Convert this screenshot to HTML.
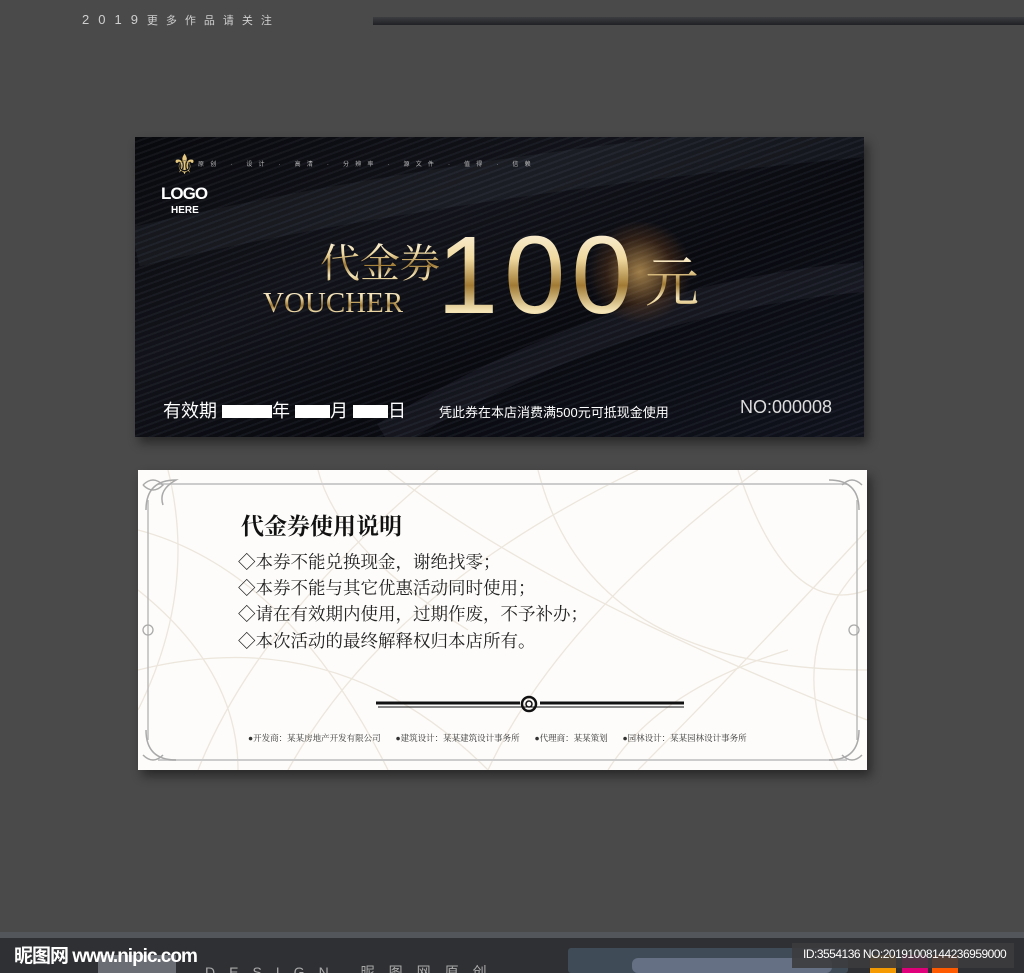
<!DOCTYPE html>
<html><head><meta charset="utf-8"><style>
*{margin:0;padding:0;box-sizing:border-box}
html,body{width:1024px;height:973px;overflow:hidden}
body{background:#4a4a4a;position:relative;font-family:"Liberation Sans","Noto Sans CJK SC",sans-serif}
.a{position:absolute}
.card1{left:135px;top:137px;width:729px;height:300px;background:linear-gradient(155deg,#08090d 0%,#12131a 35%,#090a10 60%,#10121c 100%);box-shadow:4px 6px 10px rgba(0,0,0,.45);overflow:hidden}
.stripes{left:0;top:0;width:729px;height:300px;background:repeating-linear-gradient(160deg,rgba(255,255,255,0) 0 4px,rgba(140,150,170,.08) 4px 6px);}
.gold{background:linear-gradient(180deg,#fffaf0 0%,#f0d9a0 35%,#a07a34 58%,#f6e6b8 80%,#c9a45a 100%);-webkit-background-clip:text;background-clip:text;color:transparent}
.card2{left:138px;top:470px;width:729px;height:300px;background:#fdfcfa;box-shadow:4px 6px 10px rgba(0,0,0,.45);overflow:hidden;font-family:"Liberation Serif","Noto Serif CJK SC",serif}
.line{font-size:17.5px;color:#222;left:100px;white-space:nowrap}
</style></head><body>
<div class="a" style="left:82px;top:12px;color:#cfcfcf;font-size:13px;letter-spacing:9px">2019<span style="font-size:11px;letter-spacing:8px">更多作品请关注</span></div>
<div class="a" style="left:373px;top:17px;width:651px;height:8px;background:linear-gradient(#3c3d40,#202124)"></div>

<div class="a card1">
<div class="a stripes"></div>
<svg class="a" style="left:0;top:0" width="729" height="300"><path d="M250 300 Q480 160 729 140" stroke="rgba(200,210,230,.06)" stroke-width="30" fill="none"/><path d="M0 110 Q300 40 729 0" stroke="rgba(200,210,230,.05)" stroke-width="40" fill="none"/></svg>
<div class="a" style="left:37px;top:13px;color:#e6c97e;font-size:28px;line-height:30px">⚜</div>
<div class="a" style="left:26px;top:47px;color:#fff;font-weight:bold;font-size:17px;letter-spacing:-1px">LOGO</div>
<div class="a" style="left:36px;top:68px;color:#fff;font-weight:bold;font-size:10px">HERE</div>
<div class="a" style="left:63px;top:22px;color:#bbb;font-size:6px;letter-spacing:6.2px;white-space:nowrap">原创 · 设计 · 高清 · 分辨率 · 源文件 · 值得 · 信赖</div>
<div class="a" style="left:450px;top:85px;width:110px;height:100px;border-radius:50%;background:radial-gradient(circle,rgba(255,200,110,.6),rgba(255,140,40,.15) 45%,rgba(0,0,0,0) 70%)"></div>
<div class="a gold" style="left:185px;top:100px;font-size:40px;font-family:'Noto Serif CJK SC',serif;line-height:48px">代金券</div>
<div class="a gold" style="left:128px;top:150px;font-size:29px;font-family:'Liberation Serif',serif;line-height:32px">VOUCHER</div>
<div class="a gold" style="left:302px;top:80px;font-size:110px;font-family:'Liberation Sans',sans-serif;line-height:118px;letter-spacing:6px">100</div>
<div class="a gold" style="left:510px;top:110px;font-size:54px;font-family:'Noto Serif CJK SC',serif;line-height:64px">元</div>
<div class="a" style="left:28px;top:262px;color:#fff;font-size:18px;line-height:24px;white-space:nowrap">有效期 <span style="display:inline-block;width:50px;height:13px;background:#fff;vertical-align:-1px"></span>年 <span style="display:inline-block;width:35px;height:13px;background:#fff;vertical-align:-1px"></span>月 <span style="display:inline-block;width:35px;height:13px;background:#fff;vertical-align:-1px"></span>日</div>
<div class="a" style="left:304px;top:265px;color:#fff;font-size:13px">凭此券在本店消费满500元可抵现金使用</div>
<div class="a" style="left:605px;top:260px;color:#ddd;font-size:18px">NO:000008</div>
</div>

<div class="a card2">
<svg class="a" style="left:0;top:0" width="729" height="300" fill="none" stroke="#ece6dc" stroke-width="1.3">
<path d="M60 300 Q120 150 300 0M150 300 Q250 120 500 0M350 300 Q420 150 620 0M500 300 Q600 200 729 60M0 200 Q200 150 350 300M250 0 Q400 120 729 250M0 60 Q150 100 250 300M400 0 Q450 200 729 200M600 0 Q650 150 729 120M0 120 Q100 200 100 300M30 0 Q60 120 0 240M700 300 Q640 180 729 90M180 0 Q200 80 330 160M470 300 Q520 220 650 180"/>
<path d="M20 14 H709 M20 290 H709" stroke="#ccc" stroke-width="2"/>
<path d="M10 30 V270 M719 30 V270" stroke="#bbb" stroke-width="1.5"/>
<g stroke="#aaa" stroke-width="1.5"><path d="M8 40 Q8 10 38 10 Q20 20 25 35 M5 15 q10-10 20 0 q-10 10-20 0"/><path d="M721 40 Q721 10 691 10 M724 15 q-10-10-20 0"/><path d="M8 260 Q8 290 38 290 M5 285 q10 10 20 0"/><path d="M721 260 Q721 290 691 290 M724 285 q-10 10-20 0"/></g>
<circle cx="10" cy="160" r="5" stroke="#aaa"/><circle cx="716" cy="160" r="5" stroke="#aaa"/>
<path d="M238 233 H382 M402 233 H546" stroke="#111" stroke-width="3"/><path d="M240 237 H546" stroke="#111" stroke-width="1"/>
<circle cx="391" cy="234" r="7" stroke="#111" stroke-width="2.5"/><circle cx="391" cy="234" r="3" stroke="#111" stroke-width="1.5"/>
</svg>
<div class="a" style="left:103px;top:38px;font-size:23px;font-weight:bold;color:#111">代金券使用说明</div>
<div class="a line" style="top:79px">◇本券不能兑换现金，谢绝找零；</div>
<div class="a line" style="top:105px">◇本券不能与其它优惠活动同时使用；</div>
<div class="a line" style="top:131px">◇请在有效期内使用，过期作废，不予补办；</div>
<div class="a line" style="top:158px">◇本次活动的最终解释权归本店所有。</div>
<div class="a" style="left:110px;top:262px;font-size:8.5px;color:#333;white-space:nowrap">●开发商：某某房地产开发有限公司&nbsp;&nbsp;&nbsp;&nbsp;&nbsp;&nbsp;&nbsp;●建筑设计：某某建筑设计事务所&nbsp;&nbsp;&nbsp;&nbsp;&nbsp;&nbsp;&nbsp;●代理商：某某策划&nbsp;&nbsp;&nbsp;&nbsp;&nbsp;&nbsp;&nbsp;●园林设计：某某园林设计事务所</div>
</div>

<div class="a" style="left:0;top:935px;width:1024px;height:38px;background:#2f3033"></div>
<div class="a" style="left:0;top:932px;width:1024px;height:6px;background:#53565b"></div>
<div class="a" style="left:98px;top:955px;width:78px;height:18px;background:#6a6d74"></div>
<div class="a" style="left:568px;top:948px;width:280px;height:25px;background:#3f4b57;border-radius:3px"></div>
<div class="a" style="left:632px;top:958px;width:200px;height:15px;background:#667085;border-radius:6px"></div>
<div class="a" style="left:870px;top:955px;width:26px;height:18px;background:#f59a00"></div>
<div class="a" style="left:902px;top:955px;width:26px;height:18px;background:#e0007a"></div>
<div class="a" style="left:932px;top:955px;width:26px;height:18px;background:#ff5a00"></div>
<div class="a" style="left:792px;top:943px;width:222px;height:25px;background:rgba(60,60,62,.9)"></div>
<div class="a" style="left:803px;top:947px;color:#fff;font-size:12px;letter-spacing:-.5px">ID:3554136 NO:20191008144236959000</div>
<div class="a" style="left:14px;top:941px;color:#fff;font-size:19px;font-weight:bold;letter-spacing:-1px">昵图网 www.nipic.com</div>
<div class="a" style="left:205px;top:962px;color:#aaa;font-size:14px;letter-spacing:14px">DESIGN 昵图网原创</div>
</body></html>
